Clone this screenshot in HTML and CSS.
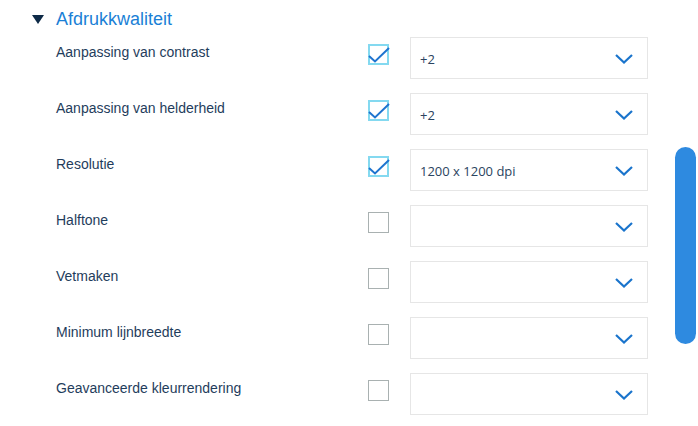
FILE: index.html
```html
<!DOCTYPE html>
<html lang="nl">
<head>
<meta charset="utf-8">
<title>Afdrukkwaliteit</title>
<link rel="stylesheet" href="styles.css">
</head>
<body>
<div class="page">
  <section class="section">
    <div class="section-head">
      <span class="caret"></span>
      <h2 class="section-title">Afdrukkwaliteit</h2>
    </div>
    <div class="rows">
      <div class="row">
        <div class="label">Aanpassing van contrast</div>
        <span class="check is-checked"><svg viewBox="0 0 22 22" class="tick"><path d="M1 12 L7 17.5 L21 4"/></svg></span>
        <div class="select"><span class="value">+2</span><svg class="chev" viewBox="0 0 18 10"><path d="M1 1 L9 8.5 L17 1"/></svg></div>
      </div>
      <div class="row">
        <div class="label">Aanpassing van helderheid</div>
        <span class="check is-checked"><svg viewBox="0 0 22 22" class="tick"><path d="M1 12 L7 17.5 L21 4"/></svg></span>
        <div class="select"><span class="value">+2</span><svg class="chev" viewBox="0 0 18 10"><path d="M1 1 L9 8.5 L17 1"/></svg></div>
      </div>
      <div class="row">
        <div class="label">Resolutie</div>
        <span class="check is-checked"><svg viewBox="0 0 22 22" class="tick"><path d="M1 12 L7 17.5 L21 4"/></svg></span>
        <div class="select"><span class="value">1200 x 1200 dpi</span><svg class="chev" viewBox="0 0 18 10"><path d="M1 1 L9 8.5 L17 1"/></svg></div>
      </div>
      <div class="row">
        <div class="label">Halftone</div>
        <span class="check"></span>
        <div class="select"><span class="value"></span><svg class="chev" viewBox="0 0 18 10"><path d="M1 1 L9 8.5 L17 1"/></svg></div>
      </div>
      <div class="row">
        <div class="label">Vetmaken</div>
        <span class="check"></span>
        <div class="select"><span class="value"></span><svg class="chev" viewBox="0 0 18 10"><path d="M1 1 L9 8.5 L17 1"/></svg></div>
      </div>
      <div class="row">
        <div class="label">Minimum lijnbreedte</div>
        <span class="check"></span>
        <div class="select"><span class="value"></span><svg class="chev" viewBox="0 0 18 10"><path d="M1 1 L9 8.5 L17 1"/></svg></div>
      </div>
      <div class="row">
        <div class="label">Geavanceerde kleurrendering</div>
        <span class="check"></span>
        <div class="select"><span class="value"></span><svg class="chev" viewBox="0 0 18 10"><path d="M1 1 L9 8.5 L17 1"/></svg></div>
      </div>
    </div>
  </section>
  <div class="scrollbar"></div>
</div>
</body>
</html>
```
FILE: styles.css
```css
html, body {
  margin: 0;
  padding: 0;
  background: #ffffff;
}
body {
  width: 698px;
  height: 426px;
  overflow: hidden;
  font-family: "Liberation Sans", Arial, sans-serif;
}
.page {
  position: relative;
  width: 698px;
  height: 426px;
}
.section {
  padding-left: 32px;
  padding-top: 9px;
}
.section-head {
  display: flex;
  align-items: center;
  height: 20px;
}
.caret {
  width: 0;
  height: 0;
  border-left: 6px solid transparent;
  border-right: 6px solid transparent;
  border-top: 9px solid #0e2a47;
  margin-top: 1px;
}
.section-title {
  margin: 0 0 0 12px;
  font-size: 18px;
  font-weight: normal;
  color: #1a7fd6;
  line-height: 20px;
}
.rows {
  margin-top: 8px;
  padding-left: 24px;
  display: flex;
  flex-direction: column;
  gap: 14px;
}
.row {
  display: grid;
  grid-template-columns: 291px 21px 238px;
  column-gap: 21px;
  height: 42px;
  align-items: start;
}
.label {
  padding-top: 7px;
  font-size: 14px;
  line-height: 16px;
  color: #1f3d5c;
}
.check {
  position: relative;
  box-sizing: border-box;
  width: 21px;
  height: 21px;
  margin-top: 7px;
  border: 1.6px solid #a9b1b1;
}
.check.is-checked {
  border: 2px solid #84d9f0;
}
.tick {
  position: absolute;
  left: -2px;
  top: -2px;
  width: 22px;
  height: 22px;
  overflow: visible;
}
.tick path {
  fill: none;
  stroke: #1f74cf;
  stroke-width: 2;
}
.select {
  box-sizing: border-box;
  height: 42px;
  border: 1px solid #e6e6e6;
  display: flex;
  align-items: center;
  justify-content: space-between;
  padding: 0 14px 0 9px;
}
.value {
  font-family: "Open Sans", "Noto Sans", sans-serif;
  font-size: 13px;
  color: #2a4460;
  padding-top: 2px;
}
.chev {
  width: 18px;
  height: 10px;
  margin-top: 1px;
}
.chev path {
  fill: none;
  stroke: #1a74cc;
  stroke-width: 2.2;
}
.scrollbar {
  position: absolute;
  left: 675px;
  top: 147px;
  width: 21px;
  height: 197px;
  border-radius: 10.5px;
  background: #2e8ae0;
}
```
